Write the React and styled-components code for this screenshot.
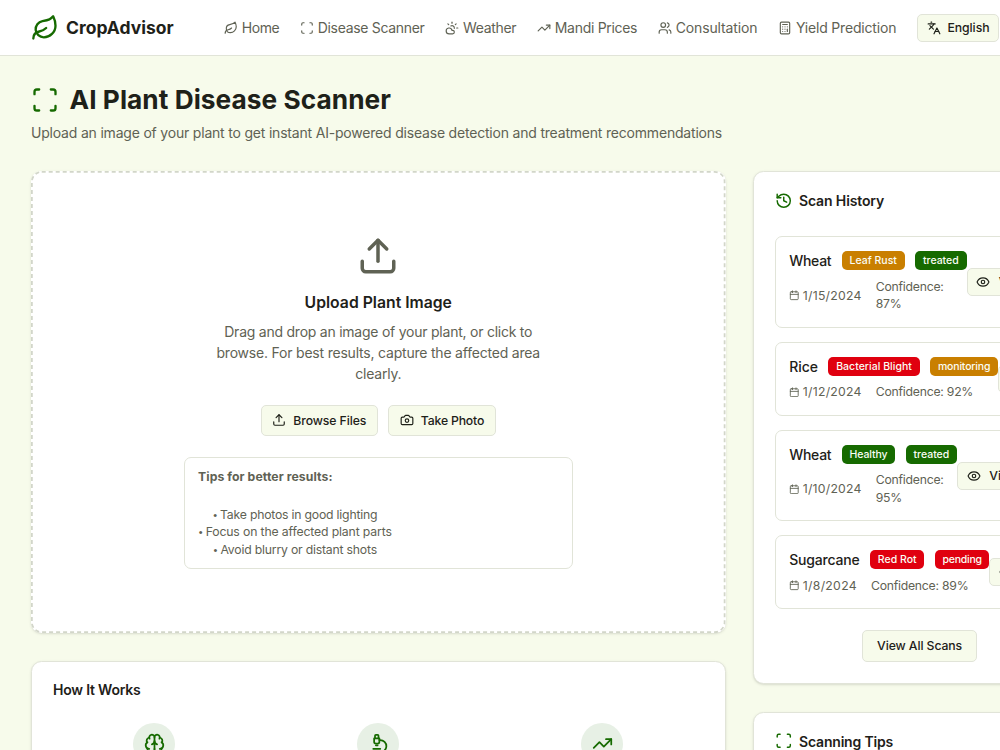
import React from 'react'
import styled, {createGlobalStyle} from "styled-components";
import {
  Leaf, Scan, CloudSun, TrendingUp, Users, Calculator, Languages,
  History, Brain, Microscope, Camera, Calendar, Eye, Upload
} from 'lucide-react';

const colors = {
  page: '#f7fbeb',
  card: '#ffffff',
  text: '#1e2119',
  muted: '#5f6254',
  border: '#e1e4d8',
  dash: '#d2d6c9',
  green: '#166a00',
  amber: '#c97f00',
  red: '#e0000f',
};

const GlobalStyle = createGlobalStyle`
  * {
    box-sizing: border-box;
  }
  html {
    overflow: hidden;
  }
  body {
    margin: 0;
    height: 750px;
    overflow: hidden;
    background: ${colors.page};
    color: ${colors.text};
    font-family: Inter, "Liberation Sans", sans-serif;
    font-size: 14px;
    line-height: 21px;
  }
  h1, h2, h3, p, ul {
    margin: 0;
    padding: 0;
  }
  svg {
    display: block;
    flex-shrink: 0;
  }
`;

const Tracked = styled.span`
  letter-spacing: ${props => props.$track || 0}px;
  white-space: nowrap;
`;

const Header = styled.header`
  display: flex;
  align-items: center;
  width: 1056px;
  min-width: 1056px;
  height: 56px;
  padding-left: 31px;
  background: ${colors.card};
  border-bottom: 1px solid ${colors.border};
`;

const Brand = styled.div`
  display: flex;
  align-items: center;
  gap: 7px;
  width: 193.25px;
  font-size: 17.5px;
  font-weight: 700;
  svg {
    color: ${colors.green};
  }
`;

const Nav = styled.nav`
  display: flex;
  align-items: center;
  gap: 21px;
  margin-right: 21px;
`;

const NavItem = styled.a`
  display: flex;
  align-items: center;
  gap: 3.5px;
  color: ${colors.muted};
`;

const Button = styled.button`
  display: flex;
  flex-shrink: 0;
  align-items: center;
  gap: ${props => props.$gap || 7}px;
  height: ${props => props.$small ? 28 : 31.5}px;
  padding: 0 ${props => props.$pad || 8.75}px;
  background: ${colors.page};
  border: 1px solid ${colors.border};
  border-radius: 5px;
  color: ${colors.text};
  font-family: inherit;
  font-size: 12.25px;
  font-weight: 500;
  line-height: 17.5px;
`;

const Main = styled.main`
  width: 1056px;
  padding: 28px 0 0 31px;
`;

const PageTitle = styled.h1`
  display: flex;
  align-items: center;
  gap: 10.5px;
  font-size: 26.25px;
  font-weight: 700;
  line-height: 31.5px;
  svg {
    color: ${colors.green};
  }
`;

const Subtitle = styled.p`
  margin-top: 6px;
  color: ${colors.muted};
`;

const Columns = styled.div`
  display: grid;
  grid-template-columns: 694.5px 333.25px;
  gap: 27.5px;
  align-items: start;
  margin-top: 28.75px;
`;

const Stack = styled.div`
  display: flex;
  flex-direction: column;
  gap: 28px;
`;

const Card = styled.section`
  background: ${colors.card};
  border: 1px solid ${colors.border};
  border-radius: 10.5px;
  box-shadow: 0 1px 3px rgba(0, 0, 0, 0.1), 0 1px 2px -1px rgba(0, 0, 0, 0.1);
`;

const UploadCard = styled(Card)`
  position: relative;
  display: flex;
  flex-direction: column;
  align-items: center;
  height: 462px;
  padding-top: 63.25px;
  border: 0;
  text-align: center;
  > svg {
    color: ${colors.muted};
  }
`;

const DashedOutline = styled.svg`
  position: absolute;
  inset: 0;
  width: 100%;
  height: 100%;
  pointer-events: none;
`;

const UploadTitle = styled.h3`
  margin-top: 14px;
  font-size: 15.75px;
  font-weight: 600;
  line-height: 24.5px;
`;

const UploadText = styled.p`
  margin-top: 6px;
  color: ${colors.muted};
`;

const Actions = styled.div`
  display: flex;
  gap: 10.5px;
  margin: 20.5px 0;
`;

const TipsBox = styled.div`
  width: 388.5px;
  height: 112.5px;
  padding: 10px 13px;
  border: 1px solid ${colors.border};
  border-radius: 7px;
  color: ${colors.muted};
  font-size: 12.25px;
  line-height: 17.5px;
  text-align: left;
`;

const TipsHeading = styled.div`
  font-weight: 700;
`;

const TipsList = styled.ul`
  width: 194.5px;
  margin-top: 20.5px;
  list-style: none;
  text-align: center;
`;

const Bullet = styled.span`
  margin-right: 3px;
  font-family: "Liberation Sans", sans-serif;
  font-size: 11px;
  line-height: 1;
`;

const StepsCard = styled(Card)`
  height: 220px;
  padding: 20px 21px;
`;

const CardTitle = styled.h2`
  display: flex;
  align-items: center;
  gap: 6.5px;
  height: 15px;
  font-size: 14px;
  font-weight: 600;
  svg {
    color: ${colors.green};
  }
`;

const Steps = styled.div`
  display: grid;
  grid-template-columns: repeat(3, 1fr);
  gap: 21px;
  justify-items: center;
  margin-top: 25.5px;
`;

const StepIcon = styled.div`
  display: flex;
  align-items: center;
  justify-content: center;
  width: 42px;
  height: 42px;
  border-radius: 50%;
  background: #e7f0e5;
  color: ${colors.green};
`;

const HistoryCard = styled(Card)`
  height: 512.25px;
  padding: 21px;
`;

const ScanList = styled.div`
  display: flex;
  flex-direction: column;
  gap: 14px;
  margin: 28px 0 20.75px;
`;

const ScanRow = styled.div`
  display: flex;
  align-items: center;
  padding: 14px 13.25px;
  border: 1px solid ${colors.border};
  border-radius: 7px;
`;

const ScanInfo = styled.div`
  flex-shrink: 0;
  width: min-content;
`;

const ScanTop = styled.div`
  display: flex;
  align-items: center;
  gap: 10.5px;
  height: 19px;
  font-weight: 500;
`;

const Badge = styled.span`
  height: 19px;
  padding: 1px 7.75px 0;
  border-radius: 5px;
  background: ${props => colors[props.$tone]};
  color: #fafdf5;
  font-size: 10.5px;
  line-height: 18px;
  white-space: nowrap;
`;

const ScanMeta = styled.div`
  display: flex;
  align-items: center;
  gap: 14px;
  margin-top: 7.5px;
  color: ${colors.muted};
  font-size: 12.25px;
  line-height: 17.5px;
`;

const ScanDate = styled.span`
  display: flex;
  align-items: center;
  gap: 3px;
`;

const Confidence = styled.span`
  letter-spacing: ${props => props.$track}px;
`;

const Center = styled.div`
  display: flex;
  justify-content: center;
`;

const TipsCard = styled(Card)`
  height: 200px;
  padding: 21px;
`;

const navItems = [
  { icon: Leaf, label: 'Home', track: -0.43 },
  { icon: Scan, label: 'Disease Scanner', track: -0.32 },
  { icon: CloudSun, label: 'Weather', track: -0.32 },
  { icon: TrendingUp, label: 'Mandi Prices', track: -0.3 },
  { icon: Users, label: 'Consultation', track: -0.13 },
  { icon: Calculator, label: 'Yield Prediction', track: -0.19 },
];

const scans = [
  { crop: 'Wheat', cropTrack: -0.3, disease: 'Leaf Rust', diseaseTone: 'amber', diseaseTrack: 0.01, status: 'treated', statusTone: 'green', statusTrack: 0, date: '1/15/2024', dateTrack: 0.26, confidence: 87 },
  { crop: 'Rice', cropTrack: -0.05, disease: 'Bacterial Blight', diseaseTone: 'red', diseaseTrack: 0.02, status: 'monitoring', statusTone: 'amber', statusTrack: -0.17, date: '1/12/2024', dateTrack: 0.26, confidence: 92 },
  { crop: 'Wheat', cropTrack: -0.3, disease: 'Healthy', diseaseTone: 'green', diseaseTrack: -0.1, status: 'treated', statusTone: 'green', statusTrack: 0, date: '1/10/2024', dateTrack: 0.23, confidence: 95 },
  { crop: 'Sugarcane', cropTrack: -0.2, disease: 'Red Rot', diseaseTone: 'red', diseaseTrack: 0.02, status: 'pending', statusTone: 'red', statusTrack: -0.26, date: '1/8/2024', dateTrack: 0.3, confidence: 89 },
];

const App = () => (
  <>
    <GlobalStyle/>
    <Header>
      <Brand>
        <Leaf size={28}/>
        <Tracked>CropAdvisor</Tracked>
      </Brand>
      <Nav>
        {navItems.map(({ icon: Icon, label, track }) => (
          <NavItem key={label}>
            <Icon size={14}/>
            <Tracked $track={track}>{label}</Tracked>
          </NavItem>
        ))}
      </Nav>
      <Button $small $gap={6.5}>
        <Languages size={14}/>
        <Tracked $track={-0.07}>English</Tracked>
      </Button>
    </Header>

    <Main>
      <PageTitle>
        <Scan size={28}/>
        <Tracked $track={0.05}>AI Plant Disease Scanner</Tracked>
      </PageTitle>
      <Subtitle>
        <Tracked $track={-0.197}>
          Upload an image of your plant to get instant AI-powered disease detection and treatment recommendations
        </Tracked>
      </Subtitle>

      <Columns>
        <Stack>
          <UploadCard>
            <DashedOutline viewBox="0 0 694.5 462">
              <rect
                x="0.9" y="0.9" width="692.7" height="460.2" rx="9.8"
                fill="none" stroke={colors.dash} strokeWidth="1.75" strokeDasharray="4 3"
              />
            </DashedOutline>
            <Upload size={42}/>
            <UploadTitle>Upload Plant Image</UploadTitle>
            <UploadText>
              <Tracked $track={-0.238}>Drag and drop an image of your plant, or click to</Tracked><br/>
              <Tracked $track={-0.207}>browse. For best results, capture the affected area</Tracked><br/>
              <Tracked $track={-0.2}>clearly.</Tracked>
            </UploadText>
            <Actions>
              <Button $pad={10.5}>
                <Upload size={14}/>
                <Tracked $track={-0.095}>Browse Files</Tracked>
              </Button>
              <Button $pad={10.5}>
                <Camera size={14}/>
                <Tracked $track={-0.18}>Take Photo</Tracked>
              </Button>
            </Actions>
            <TipsBox>
              <TipsHeading><Tracked $track={0.07}>Tips for better results:</Tracked></TipsHeading>
              <TipsList>
                <li><Bullet>•</Bullet><Tracked $track={-0.22}>Take photos in good lighting</Tracked></li>
                <li><Bullet>•</Bullet><Tracked $track={-0.15}>Focus on the affected plant parts</Tracked></li>
                <li><Bullet>•</Bullet><Tracked $track={-0.21}>Avoid blurry or distant shots</Tracked></li>
              </TipsList>
            </TipsBox>
          </UploadCard>

          <StepsCard>
            <CardTitle><Tracked $track={-0.218}>How It Works</Tracked></CardTitle>
            <Steps>
              <StepIcon><Brain size={21}/></StepIcon>
              <StepIcon><Microscope size={21}/></StepIcon>
              <StepIcon><TrendingUp size={21}/></StepIcon>
            </Steps>
          </StepsCard>
        </Stack>

        <Stack>
          <HistoryCard>
            <CardTitle>
              <History size={17.5}/>
              <Tracked $track={-0.139}>Scan History</Tracked>
            </CardTitle>
            <ScanList>
              {scans.map(scan => (
                <ScanRow key={scan.date}>
                  <ScanInfo>
                    <ScanTop>
                      <Tracked $track={scan.cropTrack}>{scan.crop}</Tracked>
                      <Badge $tone={scan.diseaseTone}><Tracked $track={scan.diseaseTrack}>{scan.disease}</Tracked></Badge>
                      <Badge $tone={scan.statusTone}><Tracked $track={scan.statusTrack}>{scan.status}</Tracked></Badge>
                    </ScanTop>
                    <ScanMeta>
                      <ScanDate>
                        <Calendar size={10.5}/>
                        <Tracked $track={scan.dateTrack}>{scan.date}</Tracked>
                      </ScanDate>
                      <Confidence $track={-0.25}>Confidence: {scan.confidence}%</Confidence>
                    </ScanMeta>
                  </ScanInfo>
                  <Button $small $gap={8.5}>
                    <Eye size={14}/>
                    <Tracked>View</Tracked>
                  </Button>
                </ScanRow>
              ))}
            </ScanList>
            <Center>
              <Button $pad={14}><Tracked $track={-0.095}>View All Scans</Tracked></Button>
            </Center>
          </HistoryCard>

          <TipsCard>
            <CardTitle>
              <Scan size={17.5}/>
              <Tracked $track={-0.186}>Scanning Tips</Tracked>
            </CardTitle>
          </TipsCard>
        </Stack>
      </Columns>
    </Main>
  </>
);

export default App;
